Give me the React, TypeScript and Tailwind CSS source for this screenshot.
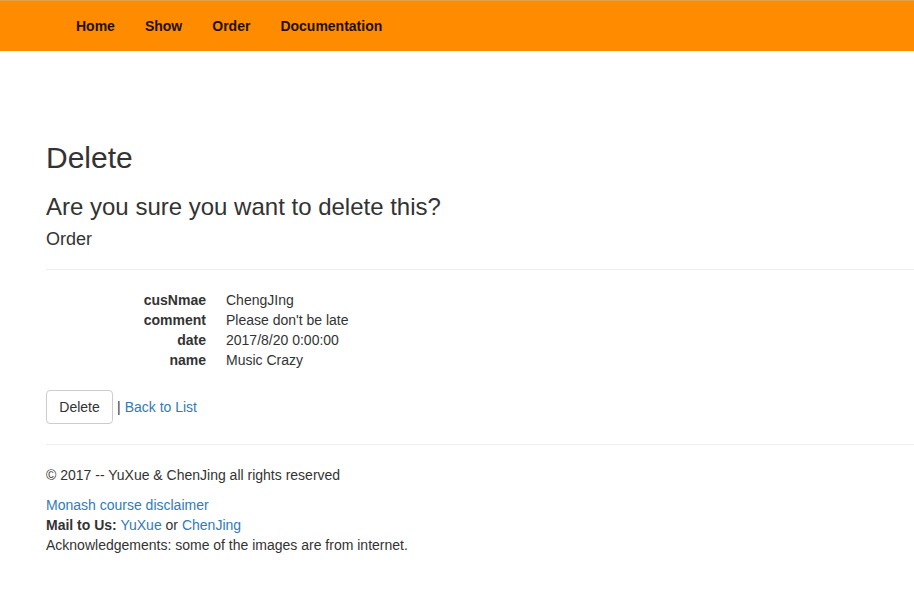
import React from 'react';

const navLinks = ['Home', 'Show', 'Order', 'Documentation'];

const details: [string, string][] = [
  ['cusNmae', 'ChengJIng'],
  ['comment', "Please don't be late"],
  ['date', '2017/8/20 0:00:00'],
  ['name', 'Music Crazy'],
];

const App: React.FC = () => {
  return (
    <div className="min-h-screen bg-white text-[14px] leading-[20px] text-[#333] font-['Liberation_Sans',Arial,sans-serif]">
      {/* Navbar */}
      <nav className="h-[51px] bg-[#ff8c00] border-t border-[#e3a24a] flex items-center pl-[61px]">
        {navLinks.map(link => (
          <a key={link} href="#" className="px-[15px] font-bold text-[#221100] leading-[20px]">
            {link}
          </a>
        ))}
      </nav>

      {/* Body */}
      <div className="pl-[46px] pt-[70px]">
        <h2 className="text-[30px] leading-[33px] mt-[20px] mb-[10px] font-normal">Delete</h2>

        <h3 className="text-[24px] leading-[26.4px] mt-[20px] mb-[10px] font-normal">Are you sure you want to delete this?</h3>
        <div>
          <h4 className="text-[18px] leading-[19.8px] mt-[10px] mb-[10px] font-normal">Order</h4>
          <hr className="mt-[19px] mb-[20px] border-t border-[#eee]" />

          <dl className="mb-[20px]">
            {details.map(([k, v]) => (
              <div key={k} className="flex">
                <dt className="w-[160px] text-right font-bold shrink-0">{k}</dt>
                <dd className="ml-[20px]">{v}</dd>
              </div>
            ))}
          </dl>

          <div className="flex items-center">
            <button className="w-[67px] py-[6px] border border-[#ccc] rounded-[4px] bg-white text-[#333] leading-[20px]">
              Delete
            </button>
            <span className="ml-[4px]">|</span>
            <a href="#" className="ml-[4px] text-[#337ab7]">Back to List</a>
          </div>
        </div>

        <hr className="mt-[20px] mb-[20px] border-t border-[#eee]" />

        <footer>
          <p className="mb-[10px]">© 2017 -- YuXue &amp; ChenJing all rights reserved</p>
          <p>
            <a href="#" className="text-[#337ab7]">Monash course disclaimer</a>
          </p>
          <p>
            <strong>Mail to Us:</strong> <a href="#" className="text-[#337ab7]">YuXue</a> or{' '}
            <a href="#" className="text-[#337ab7]">ChenJing</a>
          </p>
          <p>Acknowledgements: some of the images are from internet.</p>
        </footer>
      </div>
    </div>
  );
};

export default App;
